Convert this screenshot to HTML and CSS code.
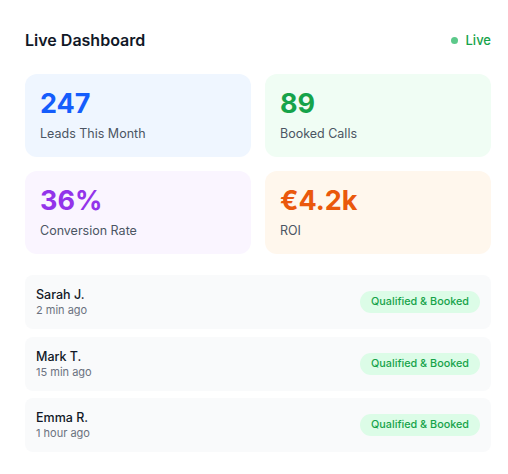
FILE: index.html
```html
<!DOCTYPE html>
<html>
<head>
<meta charset="utf-8">
<link rel="stylesheet" href="styles.css">
</head>
<body>
<div class="dash">
  <div class="header">
    <h2 class="title">Live Dashboard</h2>
    <div class="live"><span class="dot"></span>Live</div>
  </div>
  <div class="stats">
    <div class="stat blue"><div class="num">247</div><div class="label">Leads This Month</div></div>
    <div class="stat green"><div class="num">89</div><div class="label">Booked Calls</div></div>
    <div class="stat purple"><div class="num">36%</div><div class="label">Conversion Rate</div></div>
    <div class="stat orange"><div class="num">€4.2k</div><div class="label">ROI</div></div>
  </div>
  <div class="list">
    <div class="row"><div class="who"><div class="name">Sarah J.</div><div class="time">2 min ago</div></div><span class="badge">Qualified &amp; Booked</span></div>
    <div class="row"><div class="who"><div class="name">Mark T.</div><div class="time">15 min ago</div></div><span class="badge">Qualified &amp; Booked</span></div>
    <div class="row"><div class="who"><div class="name">Emma R.</div><div class="time">1 hour ago</div></div><span class="badge">Qualified &amp; Booked</span></div>
  </div>
</div>
</body>
</html>
```
FILE: styles.css
```css
* { box-sizing: border-box; }
body {
  margin: 0;
  background: #ffffff;
  font-family: Inter, "Noto Sans", sans-serif;
}
.dash {
  width: 491px;
  padding: 26px 0 0 25px;
}
.header {
  display: flex;
  justify-content: space-between;
  align-items: center;
  height: 28px;
  margin-bottom: 20px;
}
.title {
  margin: 0;
  font-size: 16px;
  font-weight: 600;
  color: #111827;
  line-height: 28px;
}
.live {
  display: flex;
  align-items: center;
  gap: 8px;
  font-size: 13px;
  font-weight: 500;
  color: #16a34a;
}
.dot {
  width: 7px;
  height: 7px;
  border-radius: 50%;
  background: #5cc98a;
}
.stats {
  display: grid;
  grid-template-columns: 1fr 1fr;
  gap: 14px;
}
.stat {
  border-radius: 12px;
  padding: 16px 15px;
  height: 83px;
}
.num {
  font-size: 27px;
  font-weight: 700;
  line-height: 28px;
}
.label {
  margin-top: 6px;
  font-size: 12.5px;
  line-height: 19px;
  color: #4b5563;
}
.blue { background: #eff6ff; }
.blue .num { color: #155dfc; }
.green { background: #f0fdf4; }
.green .num { color: #16a34a; }
.purple { background: #faf5ff; }
.purple .num { color: #9333ea; }
.orange { background: #fff7ed; }
.orange .num { color: #ea580c; }
.list {
  margin-top: 21px;
  display: flex;
  flex-direction: column;
  gap: 7.5px;
}
.row {
  display: flex;
  justify-content: space-between;
  align-items: center;
  background: #f9fafb;
  border-radius: 8px;
  height: 54px;
  padding: 0 11px;
}
.name {
  font-size: 12.5px;
  font-weight: 500;
  color: #111827;
  line-height: 17px;
}
.time {
  font-size: 11px;
  color: #6b7280;
  line-height: 15px;
}
.badge {
  background: #dcfce7;
  color: #16a34a;
  font-size: 10.8px;
  font-weight: 500;
  height: 22px;
  line-height: 22px;
  padding: 0 11px;
  border-radius: 999px;
}
```
